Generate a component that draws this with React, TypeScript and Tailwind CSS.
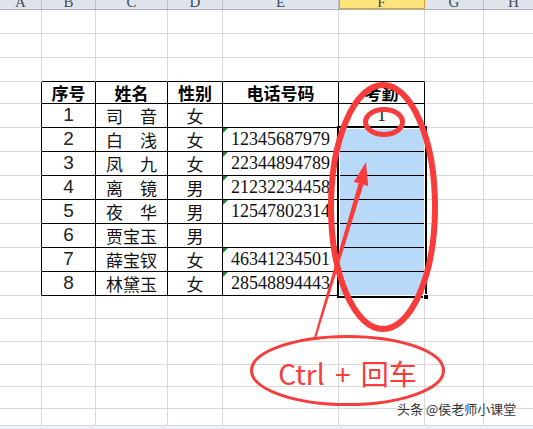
/** Excel sheet with a small roster table and red "Ctrl + 回车" annotations. */
const COLS = [42, 54, 72, 55, 116, 86, 59, 60];
const LETTERS = ["A", "B", "C", "D", "E", "F", "G", "H"];
// body rows below the column header strip
const ROW_H = [24, 24, 24, 22, 24, 24, 24, 24, 24, 24, 24, 24, 23, 23, 23, 22, 22, 17];
const T_TOP = 3; // table header row index
const T_END = 11; // last table row index

const TABLE: string[][] = [
  ["序号", "姓名", "性别", "电话号码", "考勤"],
  ["1", "司　音", "女", "", "1"],
  ["2", "白　浅", "女", "12345687979", ""],
  ["3", "凤　九", "女", "22344894789", ""],
  ["4", "离　镜", "男", "21232234458", ""],
  ["5", "夜　华", "男", "12547802314", ""],
  ["6", "贾宝玉", "男", "", ""],
  ["7", "薛宝钗", "女", "46341234501", ""],
  ["8", "林黛玉", "女", "28548894443", ""],
];

const cjk = "font-['Noto_Sans_CJK_SC',sans-serif]";
const serif = "font-['Liberation_Serif','Noto_Sans_CJK_SC',serif]";

function CellText({ r, c }: { r: number; c: number }) {
  const t = TABLE[r - T_TOP]?.[c - 1];
  if (!t) return null;
  if (r === T_TOP) return <span className={`${cjk} text-[17px] font-bold text-black`}>{t}</span>;
  if (c === 1) return <span className="font-['Liberation_Sans',sans-serif] text-[19px] text-[#222]">{t}</span>;
  if (c === 2 || c === 3) return <span className={`${cjk} whitespace-pre text-[17px] text-[#111]`}>{t}</span>;
  if (c === 4)
    return (
      <>
        <span className="absolute left-0 top-0 h-0 w-0 border-r-[5px] border-t-[5px] border-r-transparent border-t-[#1d8b2a]" />
        <span className={`${serif} whitespace-nowrap text-[18px] text-[#111]`}>{t}</span>
      </>
    );
  return <span className={`${serif} text-[17.5px] text-[#111]`}>{t}</span>;
}

function Cell({ r, c }: { r: number; c: number }) {
  const inTable = r >= T_TOP && r <= T_END && c >= 1 && c <= 5;
  const rightBlack = r >= T_TOP && r <= T_END && c >= 0 && c <= 5;
  const bottomBlack = r >= T_TOP - 1 && r <= T_END && c >= 1 && c <= 5;
  const selected = c === 5 && r >= T_TOP + 2 && r <= T_END;
  return (
    <div
      style={{ width: COLS[c], height: ROW_H[r] }}
      className={`relative flex shrink-0 items-center justify-center overflow-hidden border-b border-r ${
        rightBlack ? "border-r-black" : "border-r-[#d9d9d9]"
      } ${bottomBlack ? "border-b-black" : "border-b-[#d9d9d9]"} ${selected ? "bg-[#b9d9f9]" : "bg-white"}`}
    >
      {inTable && <CellText r={r} c={c} />}
    </div>
  );
}

export default function App() {
  return (
    <div className="relative h-[429px] w-[533px] overflow-hidden bg-white">
      {/* column header strip */}
      <div className="flex h-[10px] border-b border-[#a7b1bd] bg-[#dfe4ea]">
        {COLS.map((w, i) => (
          <div
            key={LETTERS[i]}
            style={{ width: w }}
            className={`flex shrink-0 justify-center overflow-hidden border-r ${
              i === 5
                ? "border-r-[#d9a03c] bg-[#ffe47e] shadow-[inset_1px_0_0_#d9a03c,inset_0_-1px_0_#d9a03c]"
                : "border-r-[#b9c0ca]"
            }`}
          >
            <span className="-mt-[5px] font-['Liberation_Serif',serif] text-[15px] leading-[14px] text-[#3f4958]">
              {LETTERS[i]}
            </span>
          </div>
        ))}
      </div>

      {ROW_H.map((_, r) => (
        <div key={r} className="flex">
          {COLS.map((__, c) => (
            <Cell key={c} r={r} c={c} />
          ))}
        </div>
      ))}
      <div className="h-[3px] bg-[#edf1f8]" />

      {/* selection outline + fill handle */}
      <div className="pointer-events-none absolute left-[337px] top-[126px] h-[172px] w-[90px] border-2 border-black">
        <div className="h-full w-full border border-white" />
      </div>
      <div className="absolute left-[423px] top-[294px] h-[6px] w-[6px] border border-white bg-black" />

      {/* red annotations */}
      <svg className="pointer-events-none absolute left-0 top-0" width={533} height={429} viewBox="0 0 533 429">
        <ellipse cx={383} cy={207} rx={52} ry={122} fill="none" stroke="#f83b3b" strokeWidth={6} />
        <ellipse cx={384} cy={122} rx={18.5} ry={12.5} fill="none" stroke="#f83b3b" strokeWidth={5} />
        <ellipse cx={347.5} cy={370.5} rx={96} ry={34} fill="none" stroke="#f83b3b" strokeWidth={3} />
        <polygon points="358.6,183.3 363.4,184.7 316,338.3 314,337.7" fill="#f83b3b" />
        <polygon points="366,162 353.8,181.9 368.2,186.1" fill="#f83b3b" />
      </svg>

      <div className="absolute left-[250px] top-[359px] w-[195px] text-center font-['Noto_Sans_CJK_SC',sans-serif] text-[28px] leading-none text-[#f83b3b] [word-spacing:4px]">
        Ctrl + 回车
      </div>

      <div className="absolute left-[397px] top-[402px] whitespace-nowrap font-['Noto_Sans_CJK_SC',sans-serif] text-[13px] leading-none text-[#333] [text-shadow:0_0_2px_#fff,0_0_2px_#fff]">
        头条 @侯老师小课堂
      </div>
    </div>
  );
}
